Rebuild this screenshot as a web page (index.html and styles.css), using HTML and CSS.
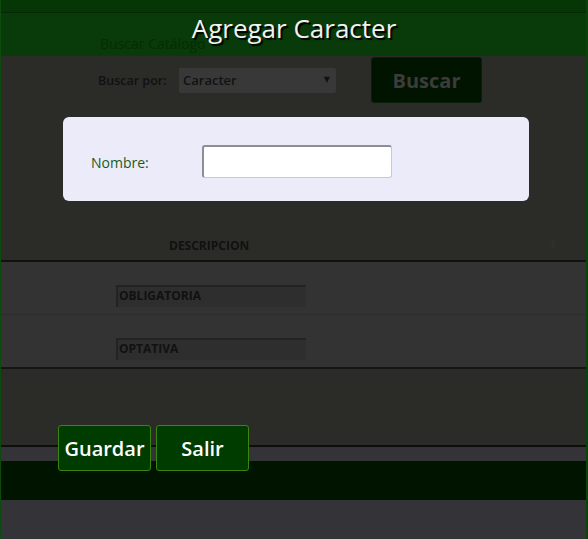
FILE: index.html
```html
<!DOCTYPE html>
<html lang="es">
<head>
<meta charset="utf-8">
<title>Agregar Caracter</title>
<link rel="stylesheet" href="styles.css">
</head>
<body>
<div class="screen">
  <div class="page">
    <div class="page-top"></div>
    <div class="catalog-head"><span class="catalog-title">Buscar Catálogo</span></div>
    <div class="search-area">
      <div class="search-row">
        <span class="search-label">Buscar por:</span>
        <div class="select">Caracter<span class="arrow">▼</span></div>
        <div class="btn-search">Buscar</div>
      </div>
    </div>
    <div class="table">
      <div class="thead"><span class="th">DESCRIPCION</span><span class="sort">⬍</span></div>
      <div class="row"><div class="cell-input">OBLIGATORIA</div></div>
      <div class="row last"><div class="cell-input">OPTATIVA</div></div>
    </div>
    <div class="after-table"></div>
    <div class="strip-a"></div>
    <div class="strip-footer"></div>
    <div class="strip-b"></div>
  </div>
  <div class="dialog">
    <div class="dialog-title">Agregar Caracter</div>
    <div class="form-box">
      <label class="form-label">Nombre:</label>
      <div class="form-input"></div>
    </div>
    <div class="actions">
      <div class="btn">Guardar</div>
      <div class="btn">Salir</div>
    </div>
  </div>
</div>
</body>
</html>
```

FILE: styles.css
```css
* { box-sizing: border-box; }
html, body { margin: 0; padding: 0; }
body {
  width: 588px;
  height: 539px;
  overflow: hidden;
  font-family: "Open Sans", "DejaVu Sans", sans-serif;
  background: #333338;
}
.screen {
  position: relative;
  width: 588px;
  height: 539px;
  overflow: hidden;
}
.page {
  display: flex;
  flex-direction: column;
  height: 539px;
  border-left: 1px solid #0e4a0e;
  border-right: 2px solid #0a420a;
  background: #2b2c27;
}
.page-top {
  height: 13px;
  background: #063506;
  border-bottom: 1px solid #042804;
}
.catalog-head {
  height: 43px;
  background: #093a09;
  padding-left: 99px;
  padding-top: 19px;
}
.catalog-title {
  font-size: 14px;
  color: #052c05;
  line-height: 18px;
}
.search-area {
  height: 174px;
  position: relative;
}
.search-row {
  display: flex;
  align-items: flex-start;
  padding-left: 97px;
  padding-top: 1px;
}
.search-label {
  margin-top: 15px;
  font-size: 12.5px;
  font-weight: 600;
  color: #111;
  width: 81px;
}
.select {
  margin-top: 11px;
  width: 157px;
  height: 25px;
  background: #383838;
  border-radius: 2px;
  font-size: 13px;
  font-weight: 600;
  color: #121212;
  padding: 3px 0 0 4px;
  position: relative;
}
.arrow {
  position: absolute;
  right: 6px;
  top: 5px;
  font-size: 8px;
  color: #111;
}
.btn-search {
  margin-left: 35px;
  width: 111px;
  height: 46px;
  background: #001400;
  border: 1px solid #082008;
  border-radius: 3px;
  color: #3c3c3c;
  font-size: 20px;
  font-weight: 700;
  display: flex;
  align-items: center;
  justify-content: center;
}
.table {
  display: flex;
  flex-direction: column;
}
.thead {
  height: 32px;
  border-bottom: 2px solid #111;
  display: flex;
  align-items: center;
  position: relative;
}
.th {
  margin-left: 168px;
  font-size: 12px;
  font-weight: 700;
  color: #111;
}
.sort {
  position: absolute;
  right: 28px;
  top: 6px;
  font-size: 12px;
  color: #2f302c;
}
.row {
  height: 53px;
  background: #333333;
  border-bottom: 1px solid #2c2c2c;
  padding-top: 23px;
  padding-left: 115px;
}
.row.last {
  height: 54px;
  border-bottom: 2px solid #151515;
}
.cell-input {
  width: 190px;
  height: 22px;
  background: #2e2e2e;
  border-top: 2px solid #232323;
  border-left: 2px solid #232323;
  font-size: 12px;
  font-weight: 700;
  color: #111;
  line-height: 18px;
  padding-left: 1px;
}
.after-table {
  height: 78px;
  border-bottom: 2px solid #0e0e0e;
}
.strip-a {
  height: 14px;
  background: #333338;
}
.strip-footer {
  height: 39px;
  background: #001400;
}
.strip-b {
  flex: 1;
  background: #333338;
}
.dialog {
  position: absolute;
  inset: 0;
  display: flex;
  flex-direction: column;
}
.dialog-title {
  height: 56px;
  text-align: center;
  font-size: 26px;
  line-height: 56px;
  color: #f2f2ee;
  text-shadow: 2px 2px 1px #000;
}
.form-box {
  margin: 61px 0 0 63px;
  width: 466px;
  height: 84px;
  background: #ecebf9;
  border-radius: 6px;
  display: flex;
  align-items: center;
  padding-left: 28px;
  padding-top: 10px;
}
.form-label {
  width: 111px;
  font-size: 14px;
  color: #1b5a1b;
  padding-bottom: 4px;
}
.form-input {
  width: 190px;
  height: 33px;
  background: #fff;
  border: 1px solid #c9c8d6;
  border-top: 2px solid #8d8c99;
  border-left: 2px solid #8d8c99;
  border-radius: 3px;
  margin-bottom: 6px;
}
.actions {
  margin: 224px 0 0 58px;
  display: flex;
  gap: 5px;
}
.btn {
  width: 93px;
  height: 46px;
  background: #003c00;
  border: 1px solid #3a8510;
  border-radius: 3px;
  color: #fff;
  font-size: 20px;
  font-weight: 600;
  display: flex;
  align-items: center;
  justify-content: center;
}
```
